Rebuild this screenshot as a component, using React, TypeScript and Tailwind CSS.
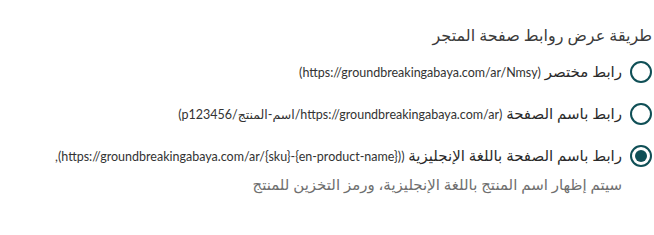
import { useState } from "react";

const OPTIONS = [
  {
    id: "short",
    label: "رابط مختصر",
    url: <span dir="ltr">(https://groundbreakingabaya.com/ar/Nmsy)</span>,
  },
  {
    id: "page-name",
    label: "رابط باسم الصفحة",
    url: <span>(https://groundbreakingabaya.com/ar/اسم-المنتج/p123456)</span>,
  },
  {
    id: "english-name",
    label: "رابط باسم الصفحة باللغة الإنجليزية",
    url: (
      <span>
        (<bdi dir="ltr">https://groundbreakingabaya.com/ar/{"{sku}-{en-product-name}"})</bdi>),
      </span>
    ),
    hint: "سيتم إظهار اسم المنتج باللغة الإنجليزية، ورمز التخزين للمنتج",
  },
];

const Radio = ({ checked }: { checked: boolean }) => (
  <span className="flex h-[22px] w-[22px] shrink-0 items-center justify-center rounded-full border-2 border-[#0f4f56]">
    {checked && <span className="h-[12px] w-[12px] rounded-full bg-[#0f4f56]" />}
  </span>
);

export default function App() {
  const [selected, setSelected] = useState("english-name");

  return (
    <div
      dir="rtl"
      className="h-[235px] w-[654px] bg-white pr-[2px] pt-[23px] text-[#333]"
      style={{ fontFamily: "Lato, 'DejaVu Sans', sans-serif" }}
    >
      <h3 className="text-[16px] leading-6 text-[#3b3b3b]">طريقة عرض روابط صفحة المتجر</h3>

      <div className="mt-[13px] flex flex-col gap-[18px]">
        {OPTIONS.map((opt) => (
          <div key={opt.id}>
            <label
              className="flex cursor-pointer items-center gap-[8px]"
              onClick={() => setSelected(opt.id)}
            >
              <Radio checked={selected === opt.id} />
              <span className="whitespace-nowrap text-[15px] leading-[22px] text-[#2a2a2a]">
                {opt.label}{" "}
                <span className="text-[12.5px] text-[#333]">{opt.url}</span>
              </span>
            </label>
            {opt.hint && (
              <p className="mr-[30px] mt-[6px] text-[15px] leading-5 text-[#6f6f6f]">{opt.hint}</p>
            )}
          </div>
        ))}
      </div>
    </div>
  );
}
